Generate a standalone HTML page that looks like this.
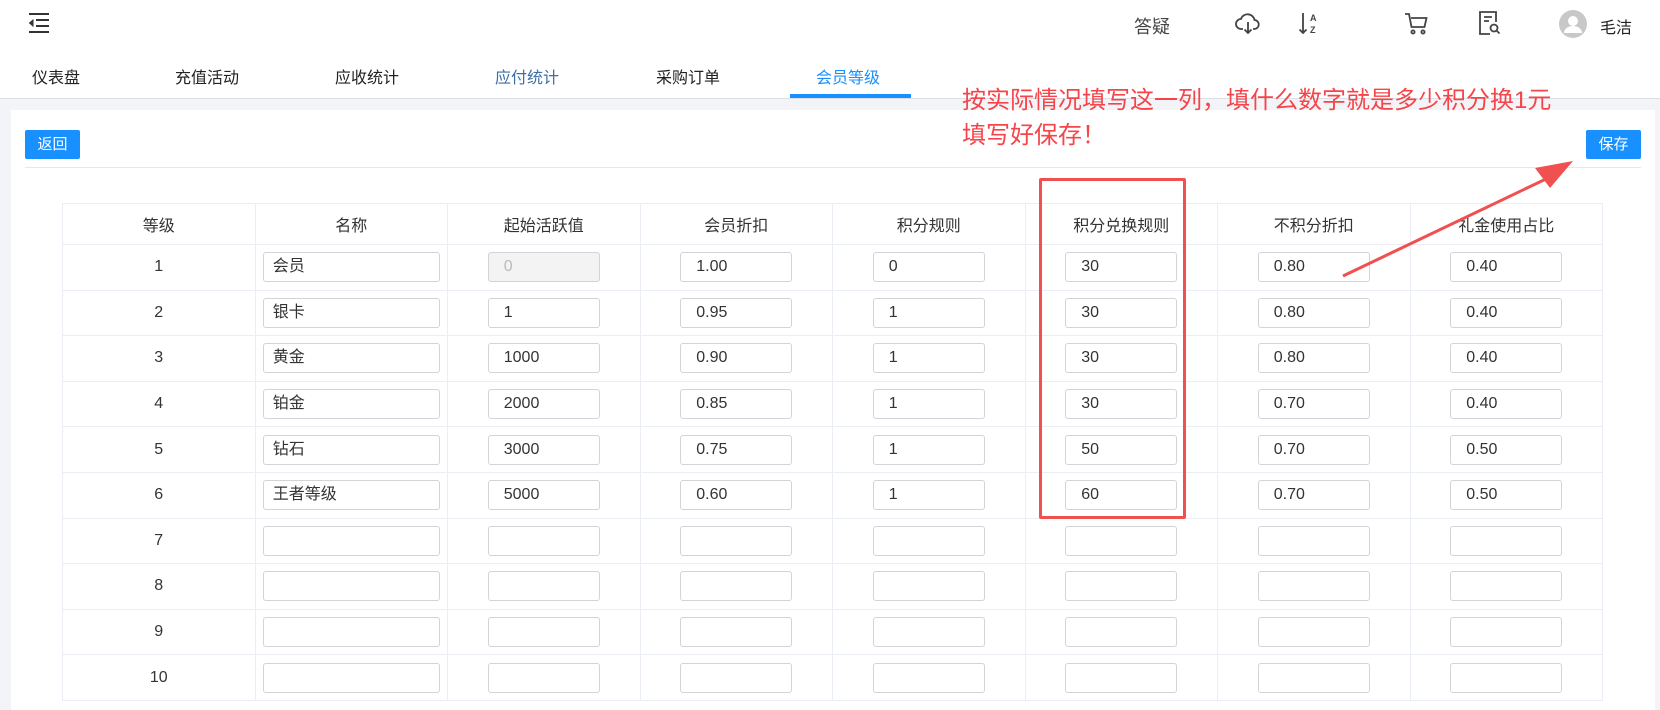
<!DOCTYPE html>
<html><head><meta charset="utf-8"><style>
*{box-sizing:border-box;margin:0;padding:0}
body{width:1660px;height:682px;overflow:hidden;background:#f3f4f7;font-family:"Liberation Sans","Noto Sans CJK SC",sans-serif;color:#333;position:relative}
.top{position:absolute;left:0;top:0;width:1660px;height:50px;background:#fff;box-shadow:0 1px 4px rgba(0,0,0,.08)}
.tabs{position:absolute;left:0;top:50px;width:1660px;height:49px;background:#fff;border-bottom:1px solid #dcdfe6}
.tab{position:absolute;top:14px;font-size:16px;color:#222}
.card{position:absolute;left:11px;top:110px;width:1644px;height:600px;background:#fff}
.btn{position:absolute;top:130px;height:29px;width:55px;background:#1890ff;color:#fff;font-size:15px;text-align:center;line-height:29px;border-radius:2px}
table{position:absolute;left:62px;top:203px;border-collapse:collapse;table-layout:fixed}
td,th{width:192.5px;border:1px solid #ebeef5;text-align:center;font-size:16px;font-weight:normal;color:#333}
th{height:41px}
td{height:45.6px}
.in{display:inline-block;width:112px;height:30px;border:1px solid #d4d4d4;border-radius:3px;text-align:left;padding-left:15px;line-height:28px;font-size:16px;vertical-align:middle}
.nm{width:177px;padding-left:9px;margin-left:0px}
.dis{background:#f3f3f3;color:#bbb}
.ann{position:absolute;left:962px;color:#f5454a;font-size:24px;line-height:30px;white-space:nowrap}
</style></head><body>
<div class="top">
<svg style="position:absolute;left:28px;top:12px" width="22" height="22" viewBox="0 0 22 22" fill="none" stroke="#333" stroke-width="2"><path d="M1 2H21M8 8H21M8 14H21M1 20H21"/><path d="M5 8L1.5 11L5 14Z" fill="#333" stroke-width="1"/></svg>
<div style="position:absolute;left:1134px;top:13px;font-size:18px;color:#444">答疑</div>
<svg style="position:absolute;left:1235px;top:12px" width="26" height="24" viewBox="0 0 26 24" fill="none" stroke="#444" stroke-width="1.8"><path d="M8 17H6a5 5 0 0 1 0-10 7 7 0 0 1 13.5 1A4.5 4.5 0 0 1 19 17h-1"/><path d="M13 10v11M9.5 17.5L13 21l3.5-3.5"/></svg>
<svg style="position:absolute;left:1298px;top:11px" width="24" height="26" viewBox="0 0 24 26" fill="none" stroke="#444" stroke-width="1.8"><path d="M5 2v20M1.5 18.5L5 22l3.5-3.5"/><text x="12" y="10" font-size="9" fill="#444" stroke="none" font-family="Liberation Sans" font-weight="bold">A</text><text x="12" y="22" font-size="9" fill="#444" stroke="none" font-family="Liberation Sans" font-weight="bold">Z</text></svg>
<svg style="position:absolute;left:1404px;top:12px" width="26" height="24" viewBox="0 0 26 24" fill="none" stroke="#444" stroke-width="1.8"><path d="M1 2h4l2.5 13h13l2-9H7"/><circle cx="9" cy="20" r="1.6"/><circle cx="19" cy="20" r="1.6"/></svg>
<svg style="position:absolute;left:1478px;top:10px" width="24" height="26" viewBox="0 0 24 26" fill="none" stroke="#444" stroke-width="1.8"><path d="M12 24H2V2h16v10M6 7h8M6 11h5"/><circle cx="16" cy="18" r="3.5"/><path d="M18.5 20.5L21.5 23.5"/></svg>
<svg style="position:absolute;left:1559px;top:10px" width="28" height="28" viewBox="0 0 28 28"><circle cx="14" cy="14" r="14" fill="#c8c8c8"/><circle cx="14" cy="11" r="5" fill="#fff"/><path d="M5 23a9 7 0 0 1 18 0z" fill="#fff"/></svg>
<div style="position:absolute;left:1600px;top:14px;font-size:16px;color:#222">毛洁</div>
</div>
<div class="tabs">
<div class="tab" style="left:32px">仪表盘</div>
<div class="tab" style="left:175px">充值活动</div>
<div class="tab" style="left:335px">应收统计</div>
<div class="tab" style="left:495px;color:#3e6fa5">应付统计</div>
<div class="tab" style="left:656px">采购订单</div>
<div class="tab" style="left:816px;color:#1890ff">会员等级</div>
<div style="position:absolute;left:790px;top:44px;width:121px;height:4px;background:#1890ff"></div>
</div>
<div class="card"></div>
<div class="btn" style="left:25px">返回</div>
<div class="btn" style="left:1586px">保存</div>
<div style="position:absolute;left:25px;top:167px;width:1616px;height:1px;background:#e8e8e8"></div>
<table>
<tr><th>等级</th><th>名称</th><th>起始活跃值</th><th>会员折扣</th><th>积分规则</th><th>积分兑换规则</th><th>不积分折扣</th><th>礼金使用占比</th></tr>
<tr><td>1</td><td><span class="in nm">会员</span></td><td><span class="in dis">0</span></td><td><span class="in">1.00</span></td><td><span class="in">0</span></td><td><span class="in">30</span></td><td><span class="in">0.80</span></td><td><span class="in">0.40</span></td></tr>
<tr><td>2</td><td><span class="in nm">银卡</span></td><td><span class="in">1</span></td><td><span class="in">0.95</span></td><td><span class="in">1</span></td><td><span class="in">30</span></td><td><span class="in">0.80</span></td><td><span class="in">0.40</span></td></tr>
<tr><td>3</td><td><span class="in nm">黄金</span></td><td><span class="in">1000</span></td><td><span class="in">0.90</span></td><td><span class="in">1</span></td><td><span class="in">30</span></td><td><span class="in">0.80</span></td><td><span class="in">0.40</span></td></tr>
<tr><td>4</td><td><span class="in nm">铂金</span></td><td><span class="in">2000</span></td><td><span class="in">0.85</span></td><td><span class="in">1</span></td><td><span class="in">30</span></td><td><span class="in">0.70</span></td><td><span class="in">0.40</span></td></tr>
<tr><td>5</td><td><span class="in nm">钻石</span></td><td><span class="in">3000</span></td><td><span class="in">0.75</span></td><td><span class="in">1</span></td><td><span class="in">50</span></td><td><span class="in">0.70</span></td><td><span class="in">0.50</span></td></tr>
<tr><td>6</td><td><span class="in nm">王者等级</span></td><td><span class="in">5000</span></td><td><span class="in">0.60</span></td><td><span class="in">1</span></td><td><span class="in">60</span></td><td><span class="in">0.70</span></td><td><span class="in">0.50</span></td></tr>
<tr><td>7</td><td><span class="in nm"></span></td><td><span class="in"></span></td><td><span class="in"></span></td><td><span class="in"></span></td><td><span class="in"></span></td><td><span class="in"></span></td><td><span class="in"></span></td></tr>
<tr><td>8</td><td><span class="in nm"></span></td><td><span class="in"></span></td><td><span class="in"></span></td><td><span class="in"></span></td><td><span class="in"></span></td><td><span class="in"></span></td><td><span class="in"></span></td></tr>
<tr><td>9</td><td><span class="in nm"></span></td><td><span class="in"></span></td><td><span class="in"></span></td><td><span class="in"></span></td><td><span class="in"></span></td><td><span class="in"></span></td><td><span class="in"></span></td></tr>
<tr><td>10</td><td><span class="in nm"></span></td><td><span class="in"></span></td><td><span class="in"></span></td><td><span class="in"></span></td><td><span class="in"></span></td><td><span class="in"></span></td><td><span class="in"></span></td></tr>
</table>
<div style="position:absolute;left:1039px;top:178px;width:147px;height:341px;border:3px solid #f05050;border-radius:2px"></div>
<div class="ann" style="top:86px">按实际情况填写这一列，填什么数字就是多少积分换1元</div>
<div class="ann" style="top:121px">填写好保存！</div>
<svg style="position:absolute;left:0;top:0" width="1660" height="682"><path d="M1343 276L1548 178" stroke="#f05050" stroke-width="3"/><path d="M1573 161L1535 168L1550 188Z" fill="#f05050"/></svg>
</body></html>
